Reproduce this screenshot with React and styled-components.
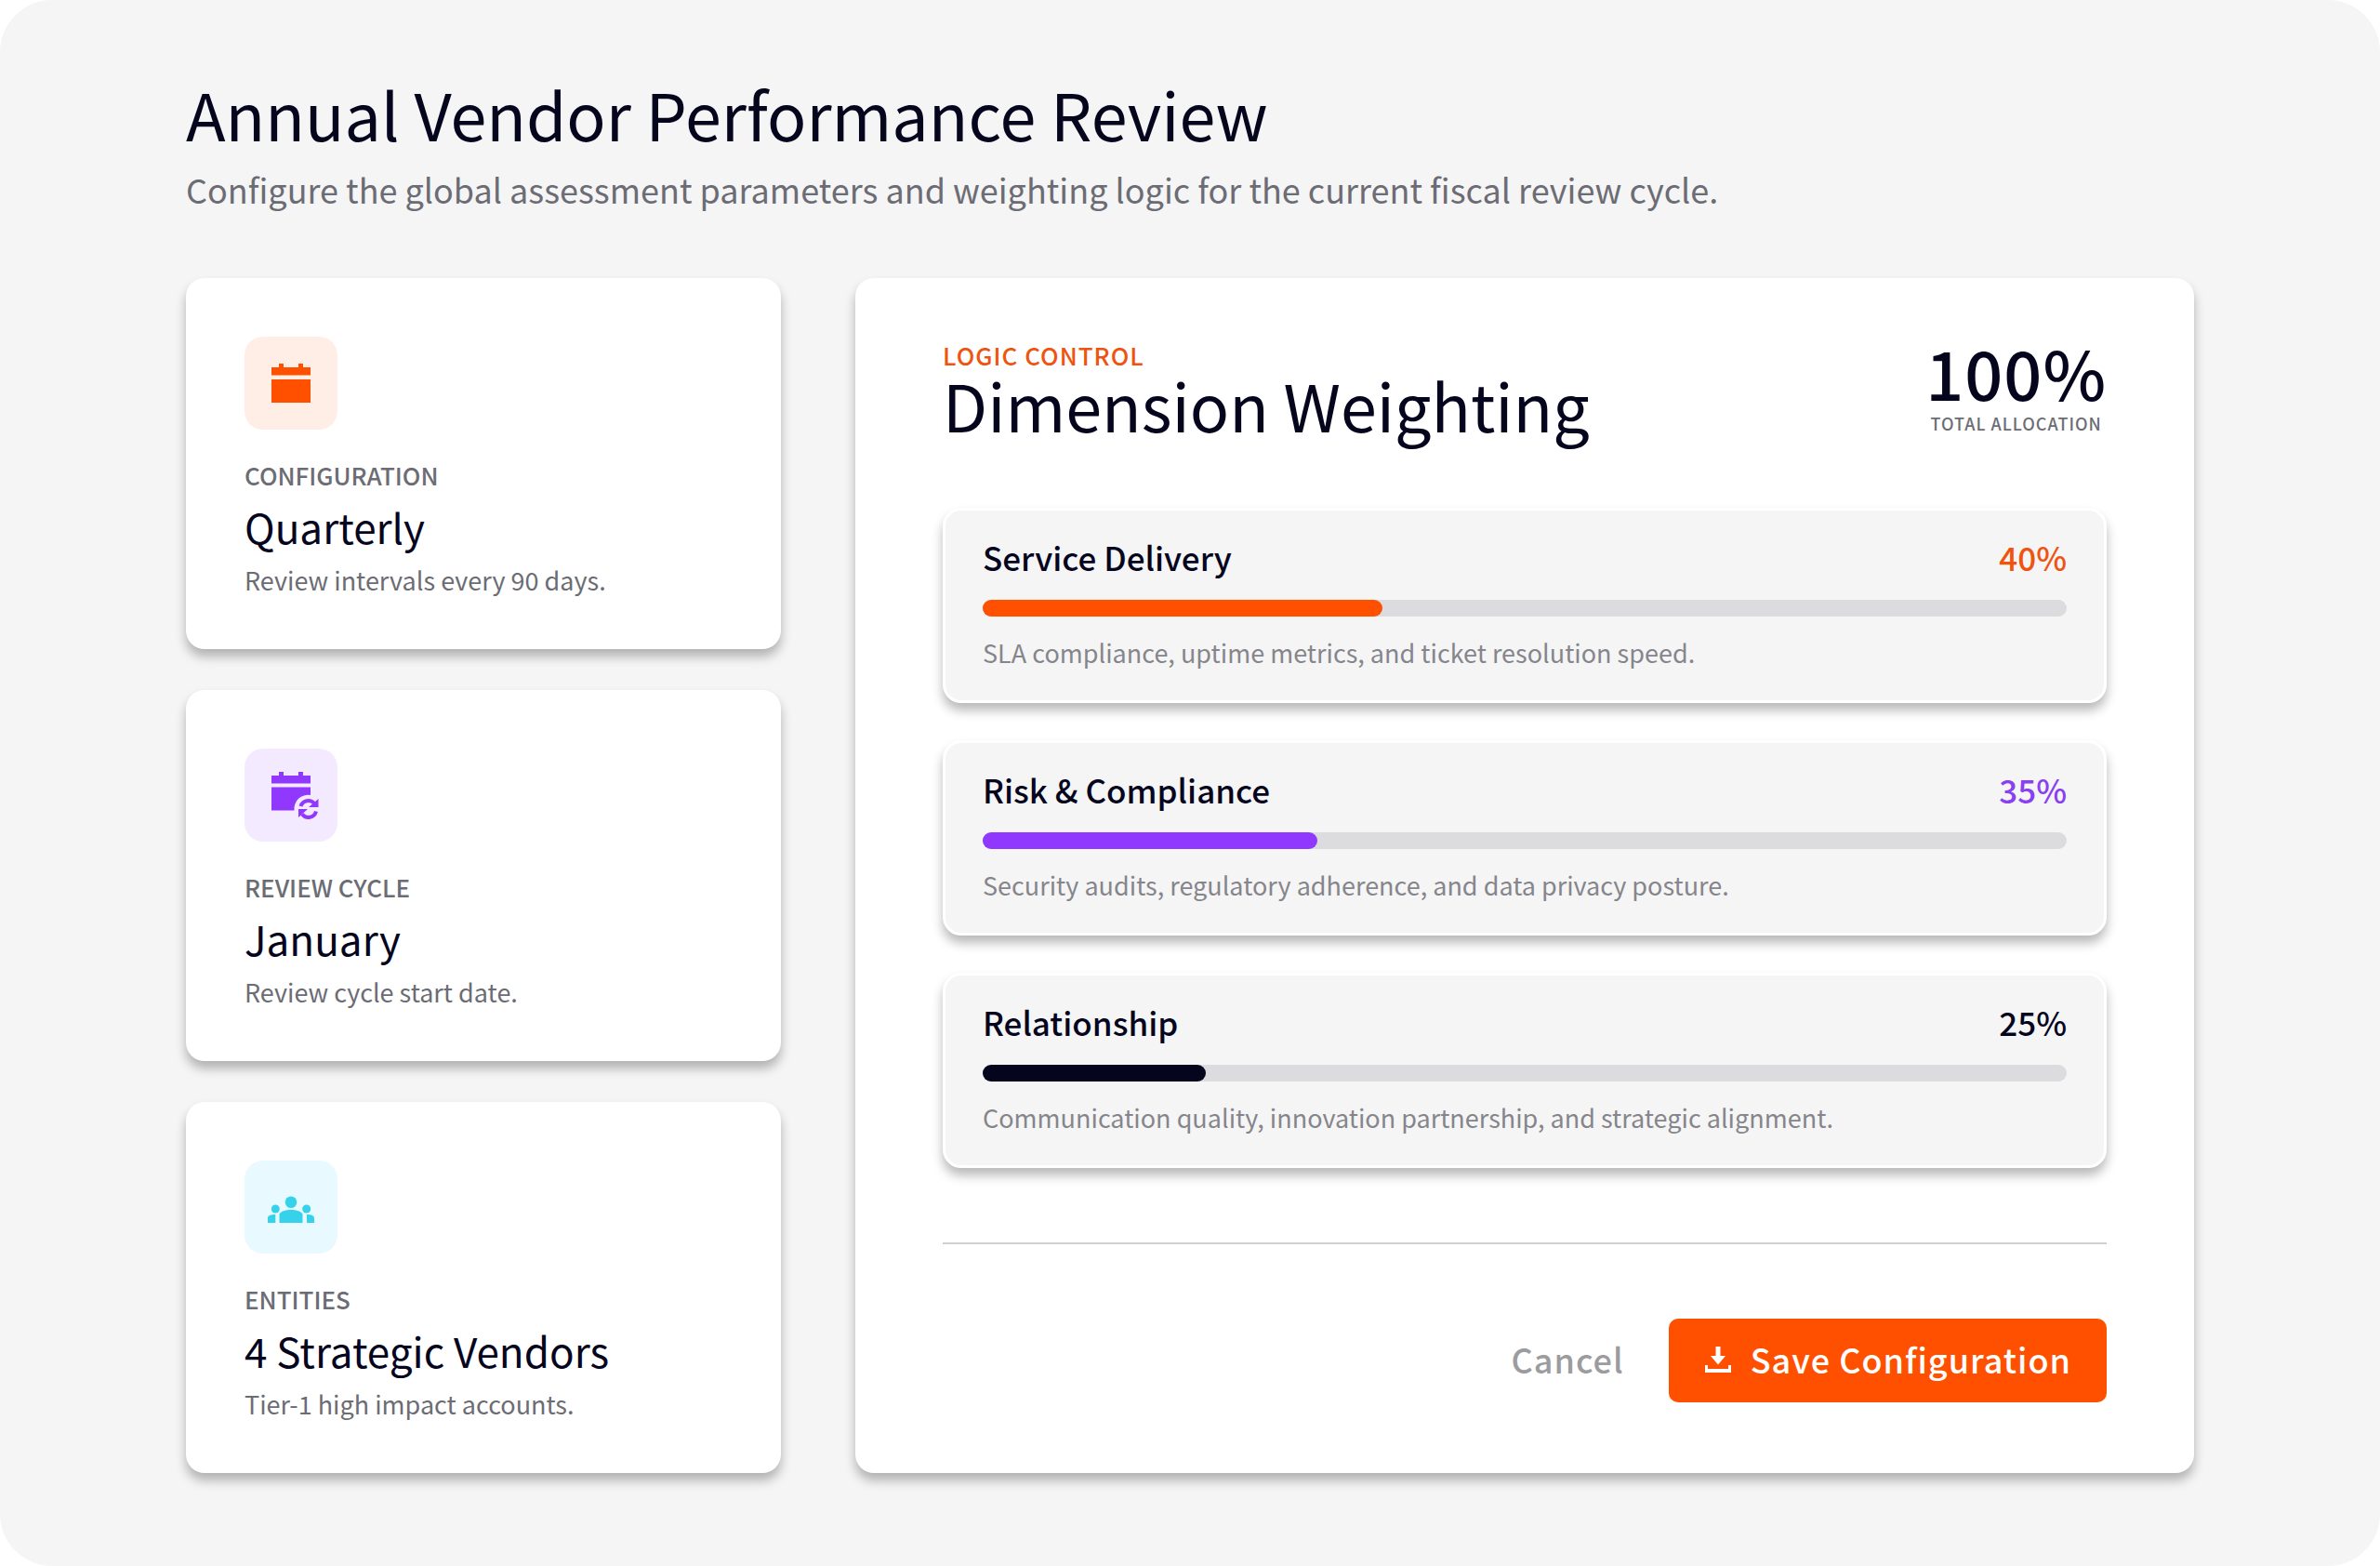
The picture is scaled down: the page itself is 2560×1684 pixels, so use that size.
import React from 'react';
import styled, { createGlobalStyle } from "styled-components";

const GlobalStyle = createGlobalStyle`
*{
box-sizing:border-box;
}
body{
margin:0;
background:white;
font-family: "Noto Sans CJK SC", "Noto Sans", sans-serif;
color:#05051e;
}
h1, h2, h3, p{
margin:0;
font-weight:400;
}
`

const Page = styled.main`
display:flex;
flex-direction:column;
min-height:100vh;
padding: 80px 200px 100px;
background:#f5f5f6;
border-radius:56px;
`

const Header = styled.header`
display:flex;
flex-direction:column;
gap:15px;
margin-bottom:72px;
`

const PageTitle = styled.h1`
font-size:70px;
line-height:84px;
`

const Subtitle = styled.p`
font-size:36px;
line-height:48px;
color:#6c6c74;
`

const Columns = styled.div`
display:grid;
grid-template-columns: 4fr 9fr;
gap:80px;
flex:1;
`

const Summary = styled.section`
display:grid;
grid-auto-rows:1fr;
gap:44px;
`

const Card = styled.article`
background:white;
border-radius:20px;
box-shadow: 0 8px 12px rgba(0, 0, 0, 0.28);
`

const SummaryCard = styled(Card)`
padding: 63px 63px 50px;
`

const IconTile = styled.div`
display:flex;
align-items:center;
justify-content:center;
width:100px;
height:100px;
margin-bottom:31px;
border-radius:20px;
color: ${props => props.$color};
background: ${props => props.$tint};
`

const SummaryLabel = styled.p`
font-size:26px;
line-height:36px;
font-weight:500;
color:#6c6c74;
`

const SummaryValue = styled.h2`
margin: 7px 0 8px;
font-size:44px;
line-height:60px;
`

const SummaryText = styled.p`
font-size:27px;
line-height:40px;
color:#6c6c74;
`

const Panel = styled(Card)`
display:flex;
flex-direction:column;
padding: 68px 94px 76px;
`

const PanelHeader = styled.header`
display:flex;
justify-content:space-between;
margin-bottom:73px;
`

const Eyebrow = styled.p`
font-size:26px;
line-height:30px;
font-weight:500;
letter-spacing:1px;
color:#ee5410;
`

const PanelTitle = styled.h2`
font-size:70px;
line-height:76px;
`

const Total = styled.div`
display:flex;
flex-direction:column;
align-items:center;
gap:8px;
`

const TotalValue = styled.strong`
font-size:72px;
line-height:66px;
font-weight:500;
letter-spacing:1px;
`

const TotalLabel = styled.span`
font-size:18px;
line-height:28px;
font-weight:500;
letter-spacing:1px;
color:#6c6c74;
`

const Dimensions = styled.div`
display:flex;
flex-direction:column;
gap:40px;
`

const Dimension = styled.section`
padding: 26px 40px 31px;
background:#f5f5f6;
border: 3px solid white;
border-radius:20px;
box-shadow: 0 8px 12px rgba(0, 0, 0, 0.28);
`

const DimensionHead = styled.div`
display:flex;
justify-content:space-between;
font-size:35px;
line-height:48px;
`

const DimensionName = styled.h3`
font-size:inherit;
font-weight:500;
`

const DimensionValue = styled.span`
font-weight:500;
color: ${props => props.$color};
`

const Track = styled.div`
height:18px;
margin: 22px 0 19px;
border-radius:9px;
background:#dcdcde;
`

const Fill = styled.div`
height:100%;
border-radius:9px;
background: ${props => props.$color};
`

const DimensionText = styled.p`
font-size:27px;
line-height:40px;
color:#85858b;
`

const Actions = styled.footer`
display:flex;
justify-content:flex-end;
align-items:center;
gap:20px;
margin-top:80px;
padding-top:80px;
border-top: 2px solid #d0d0d3;
`

const Button = styled.button`
display:flex;
align-items:center;
gap:20px;
height:90px;
border:none;
border-radius:10px;
font-family:inherit;
font-size:36px;
font-weight:500;
letter-spacing:1px;
cursor:pointer;
`

const CancelButton = styled(Button)`
padding: 0 28px 4px;
background:transparent;
color:#9c9ca0;
`

const SaveButton = styled(Button)`
padding: 0 38px 4px;
background:#ff5000;
color:white;
`

const CalendarIcon = () => (
    <svg width="60" height="60" viewBox="-2 -2 60 60" fill="currentColor" aria-hidden="true">
        <path d="M7 11h8V7h5v4h16V7h5v4h8v8.5H7zM7 24h42v25H7z" />
    </svg>
)

const CalendarSyncIcon = () => (
    <svg width="60" height="60" viewBox="-2 -2 60 60" fill="currentColor" aria-hidden="true">
        <path d="M7 7h8V3h5v4h16V3h5v4h8v8.5H7zM7 19.5h42V28A15 15 0 0 0 31.5 44.5H7z" />
        <path d="M38.5 40a8.5 8.5 0 0 1 14.5-3M55 45.5a8.5 8.5 0 0 1-15 3" fill="none" stroke="currentColor" strokeWidth="4" />
        <path d="M57.5 32v9H47zM36 43h10l-10 9z" />
    </svg>
)

const GroupIcon = () => (
    <svg width="60" height="60" viewBox="-2 -2 60 60" fill="currentColor" aria-hidden="true">
        <circle cx="28" cy="22.7" r="6.3" />
        <circle cx="11.3" cy="30" r="4.5" />
        <circle cx="44.7" cy="30" r="4.5" />
        <path d="M15.5 45v-9.5C18 32 23 31 28 31s10 1 12.500 4.500V45zM3 45v-5c0-3 3-4 8.300-4v9zM53 45v-5c0-3-3-4-8-4v9z" />
    </svg>
)

const DownloadIcon = () => (
    <svg width="30" height="30" viewBox="0 0 30 30" fill="currentColor" aria-hidden="true">
        <path d="M12.500 2h5v10h5.500l-8 9.500L7 12h5.500zM1 22h3v4h22v-4h3v8H1z" />
    </svg>
)

const summaries = [
    { label: 'CONFIGURATION', value: 'Quarterly', text: 'Review intervals every 90 days.', color: '#ff5000', tint: '#ffeee6', Icon: CalendarIcon },
    { label: 'REVIEW CYCLE', value: 'January', text: 'Review cycle start date.', color: '#9138ff', tint: '#f4eaff', Icon: CalendarSyncIcon },
    { label: 'ENTITIES', value: '4 Strategic Vendors', text: 'Tier-1 high impact accounts.', color: '#36d2ec', tint: '#e8faff', Icon: GroupIcon },
]

// fill is the drawn share of the track, value is the weight shown to the user
const dimensions = [
    { name: 'Service Delivery', value: 40, fill: 36.9, color: '#ff5000', valueColor: '#ee5410', text: 'SLA compliance, uptime metrics, and ticket resolution speed.' },
    { name: 'Risk & Compliance', value: 35, fill: 30.9, color: '#9138ff', valueColor: '#8a3ff0', text: 'Security audits, regulatory adherence, and data privacy posture.' },
    { name: 'Relationship', value: 25, fill: 20.6, color: '#05051e', valueColor: '#05051e', text: 'Communication quality, innovation partnership, and strategic alignment.' },
]

const App = () => {
    return (
        <>
            <GlobalStyle />
            <Page>
                <Header>
                    <PageTitle>Annual Vendor Performance Review</PageTitle>
                    <Subtitle>Configure the global assessment parameters and weighting logic for the current fiscal review cycle.</Subtitle>
                </Header>
                <Columns>
                    <Summary>
                        {summaries.map(({ label, value, text, color, tint, Icon }) => (
                            <SummaryCard key={label}>
                                <IconTile $color={color} $tint={tint}><Icon /></IconTile>
                                <SummaryLabel>{label}</SummaryLabel>
                                <SummaryValue>{value}</SummaryValue>
                                <SummaryText>{text}</SummaryText>
                            </SummaryCard>
                        ))}
                    </Summary>
                    <Panel>
                        <PanelHeader>
                            <div>
                                <Eyebrow>LOGIC CONTROL</Eyebrow>
                                <PanelTitle>Dimension Weighting</PanelTitle>
                            </div>
                            <Total>
                                <TotalValue>100%</TotalValue>
                                <TotalLabel>TOTAL ALLOCATION</TotalLabel>
                            </Total>
                        </PanelHeader>
                        <Dimensions>
                            {dimensions.map(item => (
                                <Dimension key={item.name}>
                                    <DimensionHead>
                                        <DimensionName>{item.name}</DimensionName>
                                        <DimensionValue $color={item.valueColor}>{item.value}%</DimensionValue>
                                    </DimensionHead>
                                    <Track role="progressbar" aria-label={item.name} aria-valuenow={item.value} aria-valuemin={0} aria-valuemax={100}>
                                        <Fill $color={item.color} style={{ width: `${item.fill}%` }} />
                                    </Track>
                                    <DimensionText>{item.text}</DimensionText>
                                </Dimension>
                            ))}
                        </Dimensions>
                        <Actions>
                            <CancelButton type="button">Cancel</CancelButton>
                            <SaveButton type="button"><DownloadIcon />Save Configuration</SaveButton>
                        </Actions>
                    </Panel>
                </Columns>
            </Page>
        </>
    );
}

export default App;
